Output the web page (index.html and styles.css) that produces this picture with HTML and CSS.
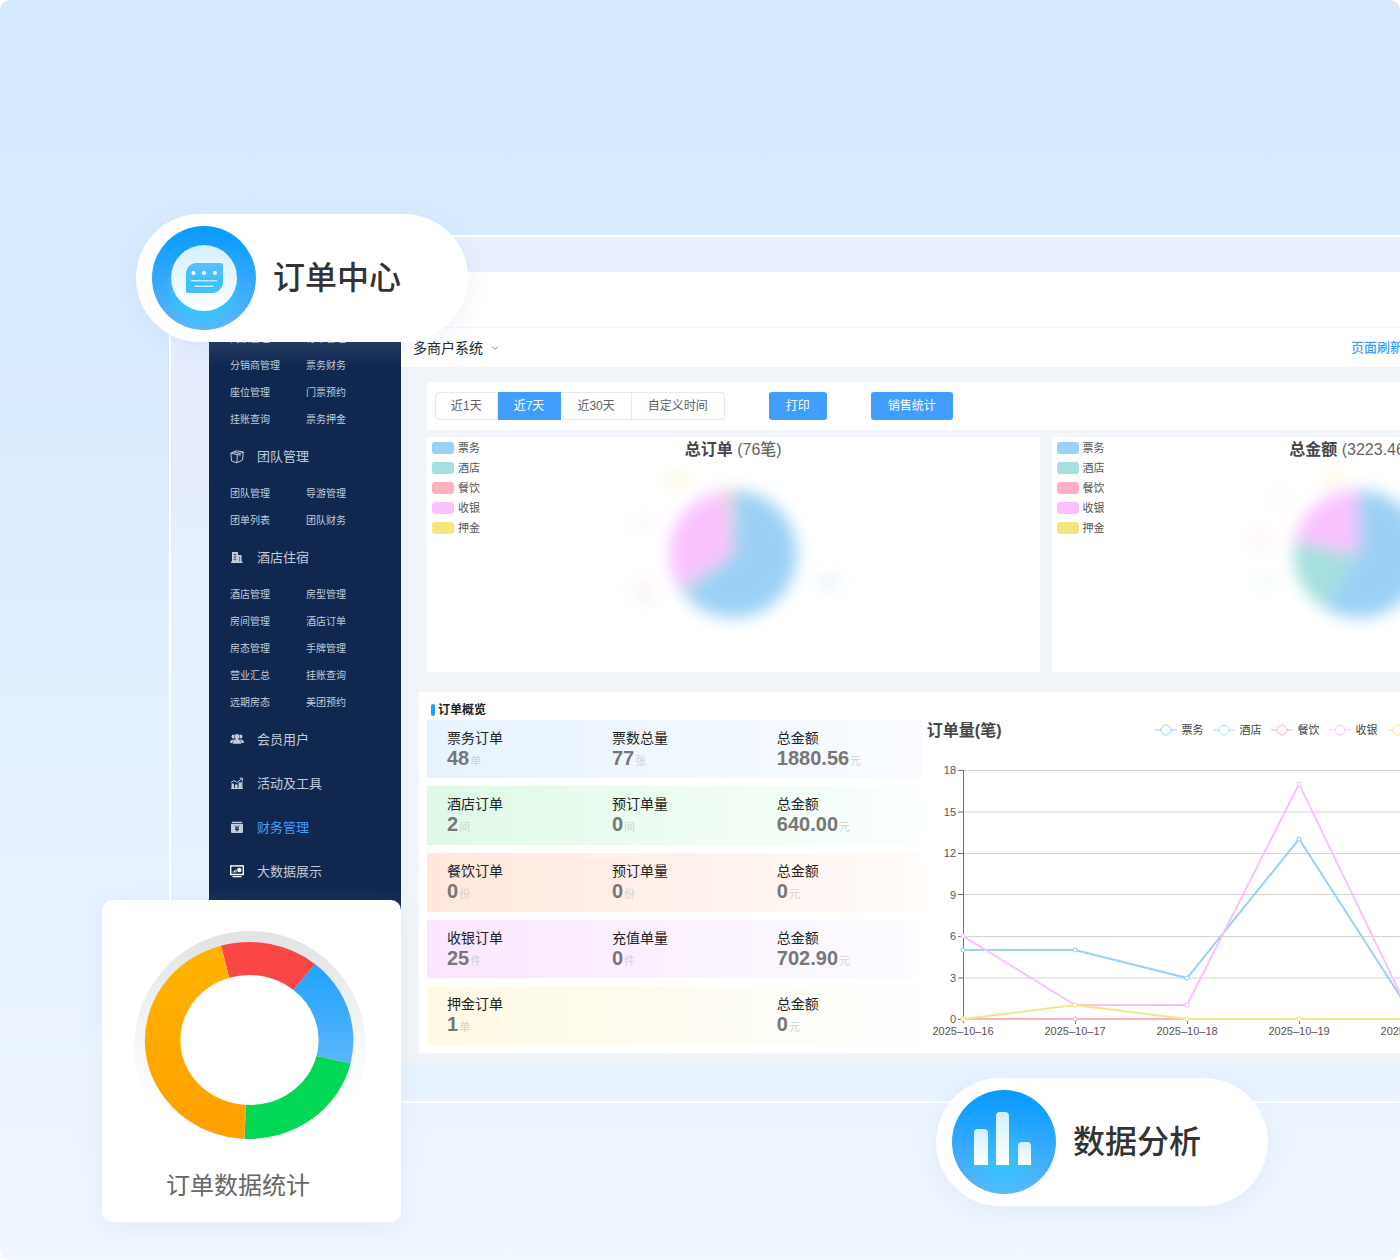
FILE: index.html
```html
<!DOCTYPE html>
<html lang="zh-CN">
<head>
  <meta charset="UTF-8" />
  <meta name="viewport" content="width=device-width, initial-scale=1.0" />
  <title>订单中心 - 多商户系统</title>
  <link rel="stylesheet" href="styles.css">
</head>
<body>

<div class="hero">
  <div class="frame">
    <div class="app">

      <nav class="sidebar">
        <a class="group" href="#">
          <svg class="icon" viewBox="0 0 14 14"><path d="M1 3h12v3a1 1 0 0 0 0 2v3H1V8a1 1 0 0 0 0-2z" fill="currentColor"/></svg>
        </a>
        <div class="sub">
          <a href="#">门票管理</a><a href="#">订单管理</a>
          <a href="#">分销商管理</a><a href="#">票务财务</a>
          <a href="#">座位管理</a><a href="#">门票预约</a>
          <a href="#">挂账查询</a><a href="#">票务押金</a>
        </div>
        <a class="group" href="#">
          <svg class="icon" viewBox="0 0 14 14"><path d="M.8 3.2 6.3.8l7 1.200-.8 8L7 12.800 1.600 11zM.8 3.200l6.500 1.500 6-2.700M7.300 4.700 7 12.800M3.600 2l6.300 1.400v2.800" fill="none" stroke="currentColor" stroke-width="1" stroke-linejoin="round"/></svg>
          团队管理
        </a>
        <div class="sub">
          <a href="#">团队管理</a><a href="#">导游管理</a>
          <a href="#">团单列表</a><a href="#">团队财务</a>
        </div>
        <a class="group" href="#">
          <svg class="icon" viewBox="0 0 14 14"><path d="M2 1h6v3h3.500v6.500h1V12H1v-1.500h1z" fill="currentColor"/><path d="M3.500 3.500h3M3.500 6h3M3.500 8.500h3M5 2.500v7M9.500 5.500v5" stroke="#102850" stroke-width=".5"/></svg>
          酒店住宿
        </a>
        <div class="sub">
          <a href="#">酒店管理</a><a href="#">房型管理</a>
          <a href="#">房间管理</a><a href="#">酒店订单</a>
          <a href="#">房态管理</a><a href="#">手牌管理</a>
          <a href="#">营业汇总</a><a href="#">挂账查询</a>
          <a href="#">远期房态</a><a href="#">美团预约</a>
        </div>
        <a class="group" href="#">
          <svg class="icon" viewBox="0 0 14 14"><g fill="currentColor"><circle cx="3.500" cy="3.500" r="2"/><circle cx="10.500" cy="3.500" r="2"/><path d="M0 10c0-2.500 1.500-3.500 3.500-3.500h7c2 0 3.500 1 3.500 3.500z"/></g><path d="M7 .7c1.600 0 2.500 1.200 2.500 2.800 0 1.200-.5 2.200-1.200 2.800 2 .5 3.200 1.600 3.200 4.700h-9c0-3.100 1.200-4.200 3.200-4.700C5 5.700 4.500 4.700 4.500 3.500 4.500 1.900 5.400.7 7 .7z" fill="currentColor" stroke="#102850" stroke-width=".5"/></svg>
          会员用户
        </a>
        <a class="group" href="#">
          <svg class="icon" viewBox="0 0 14 14"><path d="M1.500 6.500H4V11H1.500zM5 7.500h2.500V11H5zM8.500 5.500H11V11H8.500zM11.200 4.500h1.300V11h-1.300zM1 11h12v1H1z" fill="currentColor"/><path d="M1 5.500 4 3.500l3 2L12 1.500M9.800 1.200h2.700v2.500" fill="none" stroke="currentColor"/></svg>
          活动及工具
        </a>
        <a class="group active" href="#">
          <svg class="icon" viewBox="0 0 14 14"><path d="M2 .8h10v1.200H2zM1 2.800h12V11a1 1 0 0 1-1 1H2a1 1 0 0 1-1-1z" fill="currentColor"/><path d="M5 4.500l2 2 2-2M7 6.500v4M5 7h4M5 8.600h4" fill="none" stroke="#102850"/></svg>
          财务管理
        </a>
        <a class="group" href="#">
          <svg class="icon bright" viewBox="0 0 14 14"><rect x=".7" y=".9" width="12.600" height="8.600" fill="none" stroke="currentColor" stroke-width="1.400"/><path d="M2.500 6.500h1v1h-1zM4 5.500h1v2H4zM5.500 4.500h1v3h-1zM2.500 11h9v1.300h-9z" fill="currentColor"/><circle cx="9.300" cy="5" r="2.200" fill="currentColor"/></svg>
          大数据展示
        </a>
      </nav>

      <main class="main">
        <div class="topbar"></div>
        <header class="crumbs">
          <button class="switcher" type="button">
            多商户系统
            <svg viewBox="0 0 8 8"><path d="M1 2.500 4 5.500 7 2.500" fill="none" stroke="currentColor"/></svg>
          </button>
          <a class="refresh" href="#">页面刷新</a>
        </header>

        <div class="content">
          <div class="toolbar">
            <div class="range">
              <button type="button">近1天</button>
              <button type="button" class="on">近7天</button>
              <button type="button">近30天</button>
              <button type="button">自定义时间</button>
            </div>
            <button class="primary" type="button">打印</button>
            <button class="primary" type="button">销售统计</button>
          </div>

          <div class="pies">
            <section class="pie-card">
              <ul class="swatches">
                <li class="ticket">票务</li>
                <li class="hotel">酒店</li>
                <li class="food">餐饮</li>
                <li class="cash">收银</li>
                <li class="deposit">押金</li>
              </ul>
              <h2>总订单 <span>(76笔)</span></h2>
              <svg class="pie" viewBox="0 0 613 235">
                <defs>
                  <filter id="soft" x="-30%" y="-30%" width="160%" height="160%"><feGaussianBlur stdDeviation="8"/></filter>
                </defs>
                <g filter="url(#soft)">
                  <g opacity=".3">
                    <ellipse cx="250" cy="43" rx="14" ry="6" fill="#f4e77f"/>
                    <ellipse cx="215" cy="86" rx="12" ry="6" fill="#f1dcff"/>
                    <ellipse cx="216" cy="152" rx="12" ry="5" fill="#ffc8d0"/>
                    <ellipse cx="219" cy="161" rx="12" ry="5" fill="#cfdcdc"/>
                    <ellipse cx="402" cy="145" rx="12" ry="7" fill="#a9d2ff"/>
                  </g>
                  <path d="M306 117V53A64 64 0 1 1 259 160z" fill="#9bd1f5"/>
                  <path d="M306 117 259 160A64 64 0 0 1 253 152z" fill="#a6dfdf"/>
                  <path d="M306 117 253 152A64 64 0 0 1 301 53z" fill="#f9c2ff"/>
                  <path d="M306 117 301 53H306z" fill="#f4e77f"/>
                </g>
              </svg>
            </section>

            <section class="pie-card">
              <ul class="swatches">
                <li class="ticket">票务</li>
                <li class="hotel">酒店</li>
                <li class="food">餐饮</li>
                <li class="cash">收银</li>
                <li class="deposit">押金</li>
              </ul>
              <h2>总金额 <span>(3223.46元)</span></h2>
              <svg class="pie" viewBox="0 0 613 235">
                <g filter="url(#soft)">
                  <g opacity=".3">
                    <ellipse cx="282" cy="43" rx="14" ry="6" fill="#f4e77f"/>
                    <ellipse cx="229" cy="61" rx="12" ry="6" fill="#f1dcff"/>
                    <ellipse cx="209" cy="103" rx="12" ry="6" fill="#ffc8d0"/>
                    <ellipse cx="213" cy="146" rx="12" ry="6" fill="#c9efdf"/>
                  </g>
                  <path d="M306 117V53A64 64 0 1 1 274 172z" fill="#9bd1f5"/>
                  <path d="M306 117 274 172A64 64 0 0 1 243 104z" fill="#a6dfdf"/>
                  <path d="M306 117 243 104A64 64 0 0 1 306 53z" fill="#f9c2ff"/>
                </g>
              </svg>
            </section>
          </div>

          <section class="overview">
            <div class="summary">
              <h3>订单概览</h3>
              <dl class="row ticket">
                <div><dt>票务订单</dt><dd>48<small>单</small></dd></div>
                <div><dt>票数总量</dt><dd>77<small>张</small></dd></div>
                <div><dt>总金额</dt><dd>1880.56<small>元</small></dd></div>
              </dl>
              <dl class="row hotel">
                <div><dt>酒店订单</dt><dd>2<small>间</small></dd></div>
                <div><dt>预订单量</dt><dd>0<small>间</small></dd></div>
                <div><dt>总金额</dt><dd>640.00<small>元</small></dd></div>
              </dl>
              <dl class="row food">
                <div><dt>餐饮订单</dt><dd>0<small>份</small></dd></div>
                <div><dt>预订单量</dt><dd>0<small>份</small></dd></div>
                <div><dt>总金额</dt><dd>0<small>元</small></dd></div>
              </dl>
              <dl class="row cash">
                <div><dt>收银订单</dt><dd>25<small>件</small></dd></div>
                <div><dt>充值单量</dt><dd>0<small>件</small></dd></div>
                <div><dt>总金额</dt><dd>702.90<small>元</small></dd></div>
              </dl>
              <dl class="row deposit">
                <div><dt>押金订单</dt><dd>1<small>单</small></dd></div>
                <div class="last"><dt>总金额</dt><dd>0<small>元</small></dd></div>
              </dl>
            </div>

            <div class="trend">
              <div class="trend-head">
                <h2>订单量(笔)</h2>
                <ul class="keys">
                  <li class="ticket"><svg viewBox="0 0 22 12"><path d="M0 6h6M16 6h6"/><circle cx="11" cy="6" r="5"/></svg>票务</li>
                  <li class="hotel"><svg viewBox="0 0 22 12"><path d="M0 6h6M16 6h6"/><circle cx="11" cy="6" r="5"/></svg>酒店</li>
                  <li class="food"><svg viewBox="0 0 22 12"><path d="M0 6h6M16 6h6"/><circle cx="11" cy="6" r="5"/></svg>餐饮</li>
                  <li class="cash"><svg viewBox="0 0 22 12"><path d="M0 6h6M16 6h6"/><circle cx="11" cy="6" r="5"/></svg>收银</li>
                  <li class="deposit"><svg viewBox="0 0 22 12"><path d="M0 6h6M16 6h6"/><circle cx="11" cy="6" r="5"/></svg>押金</li>
                </ul>
              </div>
              <svg class="plot" viewBox="0 0 742 303">
                <path class="grid" d="M41 28.500H714M41 70H714M41 111.500H714M41 152.500H714M41 194.500H714M41 236H714"/>
                <path class="axis" d="M41.500 28V281M36 28.500h5M36 70h5M36 111.500h5M36 152.500h5M36 194.500h5M36 236h5M36 277.500H714M153.500 278v4M265.500 278v4M377.500 278v4M490.500 278v4M602.500 278v4M714.500 278v4"/>
                <g class="ylabels">
                  <text x="34" y="32">18</text>
                  <text x="34" y="74">15</text>
                  <text x="34" y="115">12</text>
                  <text x="34" y="157">9</text>
                  <text x="34" y="198">6</text>
                  <text x="34" y="240">3</text>
                  <text x="34" y="281">0</text>
                </g>
                <g class="xlabels">
                  <text x="41" y="293">2025–10–16</text>
                  <text x="153" y="293">2025–10–17</text>
                  <text x="265" y="293">2025–10–18</text>
                  <text x="377" y="293">2025–10–19</text>
                  <text x="489" y="293">2025–10–20</text>
                  <text x="602" y="293">2025–10–21</text>
                  <text x="714" y="293">2025–10–22</text>
                </g>
                <g class="line ticket">
                  <path d="M41 208 153 208 265 236 377 97 489 271"/>
                  <circle cx="41" cy="208" r="2"/><circle cx="153" cy="208" r="2"/><circle cx="265" cy="236" r="2"/><circle cx="377" cy="97" r="2"/>
                </g>
                <g class="line food">
                  <path d="M41 277H714"/>
                  <circle cx="41" cy="277" r="2"/><circle cx="153" cy="277" r="2"/>
                </g>
                <g class="line cash">
                  <path d="M41 194 153 263 265 263 377 42 489 274"/>
                  <circle cx="41" cy="194" r="2"/><circle cx="153" cy="263" r="2"/><circle cx="265" cy="263" r="2"/><circle cx="377" cy="42" r="2"/>
                </g>
                <g class="line deposit">
                  <path d="M41 277 153 263 265 277H714"/>
                  <circle cx="41" cy="277" r="2"/><circle cx="153" cy="263" r="2"/><circle cx="265" cy="277" r="2"/><circle cx="377" cy="277" r="2"/>
                </g>
              </svg>
            </div>
          </section>
        </div>
      </main>
    </div>
  </div>

  <!-- floating badges -->
  <div class="pill pill-orders">
    <svg viewBox="0 0 104 104">
      <defs>
        <linearGradient id="disc" x1="0" y1="0" x2="0" y2="1"><stop offset="0" stop-color="#069aff"/><stop offset="1" stop-color="#5cb6fa"/></linearGradient>
        <radialGradient id="glow" cx=".5" cy=".6" r=".38"><stop offset="0" stop-color="#2ad0ff"/><stop offset=".6" stop-color="#2ccbff" stop-opacity=".7"/><stop offset="1" stop-color="#2ad0ff" stop-opacity="0"/></radialGradient>
        <radialGradient id="glow-low" cx=".5" cy=".68" r=".36"><stop offset="0" stop-color="#2ccbff" stop-opacity=".8"/><stop offset="1" stop-color="#2ad0ff" stop-opacity="0"/></radialGradient>
        <linearGradient id="pale" x1="0" y1="0" x2="0" y2="1"><stop offset="0" stop-color="#d3f0ff"/><stop offset="1" stop-color="#fff"/></linearGradient>
        <linearGradient id="note" x1="0" y1="0" x2="0" y2="1"><stop offset="0" stop-color="#5fbcf8"/><stop offset=".7" stop-color="#36c3fb"/><stop offset="1" stop-color="#4bbdfa"/></linearGradient>
      </defs>
      <circle cx="52" cy="52" r="52" fill="url(#disc)"/>
      <circle cx="52" cy="52" r="52" fill="url(#glow)"/>
      <circle cx="52" cy="52" r="33" fill="url(#pale)"/>
      <path d="M44 37H69a2 2 0 0 1 2 2V56a11 11 0 0 1-11 11H36a2 2 0 0 1-2-2V47a10 10 0 0 1 10-10z" fill="url(#note)"/>
      <g fill="#fff"><circle cx="41.500" cy="47" r="2"/><circle cx="52" cy="47" r="2"/><circle cx="63" cy="47" r="2"/></g>
      <path d="M39.500 54.700h25M43 60.300h18" stroke="#c6eeff" stroke-width="1.600" stroke-linecap="round"/>
    </svg>
    <strong>订单中心</strong>
  </div>

  <div class="pill pill-analysis">
    <svg viewBox="0 0 104 104">
      <circle cx="52" cy="52" r="52" fill="url(#disc)"/>
      <circle cx="52" cy="52" r="52" fill="url(#glow-low)"/>
      <path d="M22 75V43a4 4 0 0 1 4-4h6a4 4 0 0 1 4 4v32z" fill="url(#pale)"/>
      <path d="M44 75V26a4 4 0 0 1 4-4h5a4 4 0 0 1 4 4v49z" fill="url(#pale)"/>
      <path d="M66 75V56a4 4 0 0 1 4-4h5a4 4 0 0 1 4 4v19z" fill="url(#pale)"/>
    </svg>
    <strong>数据分析</strong>
  </div>

  <div class="stat-card">
    <svg viewBox="0 0 233 232">
      <defs>
        <linearGradient id="halo" x1="0" y1="0" x2="0" y2="1"><stop offset="0" stop-color="#e1e2e4"/><stop offset=".5" stop-color="#f7f8f9"/><stop offset=".75" stop-color="#fff"/></linearGradient>
        <linearGradient id="amber" x1="0" y1="0" x2="0" y2="1"><stop offset="0" stop-color="#ffb400"/><stop offset="1" stop-color="#ff9f00"/></linearGradient>
        <linearGradient id="azure" x1="0" y1="0" x2="0" y2="1"><stop offset="0" stop-color="#1fa3ff"/><stop offset="1" stop-color="#5cb6f9"/></linearGradient>
      </defs>
      <circle cx="116" cy="117" r="116" fill="url(#halo)"/>
      <ellipse cx="116" cy="111" rx="80" ry="80" fill="#fff"/>
      <path d="M87 15.700A104.500 98.500 0 0 1 181 34L159.500 60A69 65 0 0 0 95.300 47.800z" fill="#f94745"/>
      <path d="M181 34A104.500 98.500 0 0 1 216.500 133.500L182.500 126A69 65 0 0 0 159.500 60z" fill="url(#azure)"/>
      <path d="M216.500 133.500A104.500 98.500 0 0 1 110.500 208.900L111.800 174.900A69 65 0 0 0 182.500 126z" fill="#02d855"/>
      <path d="M110.500 208.900A104.500 98.500 0 0 1 87 15.700L95.300 47.800A69 65 0 0 0 111.800 174.900z" fill="url(#amber)"/>
    </svg>
    <p>订单数据统计</p>
  </div>
</div>

</body>
</html>
```
FILE: styles.css
```css
* {
  box-sizing: border-box;
}

body {
  margin: 0;
  background: #ffffff;
  font-family: "Liberation Sans", "Noto Sans CJK SC", sans-serif;
  line-height: 20px;
  color: #333333;
}

h2, h3, p, ul, dl, dd {
  margin: 0;
  padding: 0;
}

ul {
  list-style: none;
}

a {
  color: inherit;
  text-decoration: none;
}

button {
  font-family: inherit;
  line-height: 20px;
  cursor: pointer;
}

.hero {
  position: relative;
  min-height: 100vh;
  padding: 235px 0 157px 169px;
  overflow: hidden;
  border-radius: 10px;
  background: linear-gradient(180deg, #d5e9ff 0%, #dbecff 35%, #e5f1ff 65%, #f0f7ff 100%);
}

/* the window runs past the right edge of the page */
.frame {
  margin-right: -280px;
  padding: 35px 0 38px 38px;
  border: 2px solid #ffffff;
  border-right: none;
  background: linear-gradient(180deg, #e8efff 0%, #e5edff 20%, #e5f1ff 60%, #e8f3ff 100%);
}

.app {
  display: flex;
}

/* sidebar */
.sidebar {
  flex: 0 0 192px;
  padding-top: 8px;
  background: #102850;
  color: #c3ccdb;
}

.group {
  display: flex;
  align-items: center;
  gap: 13px;
  height: 44px;
  padding-left: 21px;
  font-size: 13px;
}

.group.active {
  color: #409eff;
}

.icon {
  width: 14px;
  height: 14px;
  color: #c3ccdb;
}

.icon.bright {
  color: #ffffff;
}

.sub {
  display: grid;
  grid-template-columns: 76px 1fr;
  padding: 1px 0 2px 21px;
  font-size: 10px;
  line-height: 27px;
}

/* main */
.main {
  flex: 1;
  min-width: 0;
  background: #f1f5f9;
}

.topbar {
  height: 55px;
  background: #ffffff;
}

.crumbs {
  display: flex;
  align-items: center;
  justify-content: space-between;
  height: 40px;
  padding: 0 277px 0 12px;
  border-top: 1px solid #f7f7f7;
  background: #ffffff;
}

.switcher {
  display: flex;
  align-items: center;
  gap: 8px;
  padding: 0;
  border: none;
  background: none;
  color: #222222;
  font-size: 14px;
}

.switcher svg {
  width: 8px;
  height: 8px;
  color: #888888;
}

.refresh {
  color: #409eff;
  font-size: 13px;
  font-weight: 500;
}

.content {
  padding: 15px 8px 10px 18px;
}

.toolbar {
  display: flex;
  align-items: center;
  gap: 44px;
  height: 48px;
  margin: 0 8px;
  padding: 0 8px;
  background: #ffffff;
}

.range {
  display: flex;
}

.range button {
  height: 28px;
  padding: 0 16px;
  border: 1px solid #e6eaf0;
  border-left: none;
  background: #ffffff;
  color: #606266;
  font-size: 12px;
}

.range button:first-child {
  padding: 0 15px;
  border-left: 1px solid #e6eaf0;
  border-radius: 4px 0 0 4px;
}

.range button:last-child {
  border-radius: 0 4px 4px 0;
}

.range .on {
  border-color: #409eff;
  background: #409eff;
  color: #ffffff;
}

.primary {
  height: 28px;
  padding: 0 17px;
  border: none;
  border-radius: 3px;
  background: #409eff;
  color: #ffffff;
  font-size: 12px;
}

.pies {
  display: grid;
  grid-template-columns: 1fr 1fr;
  gap: 12px;
  margin: 7px 8px 20px;
}

.pie-card {
  display: grid;
  background: #ffffff;
}

.pie-card > * {
  grid-area: 1 / 1;
}

.pie-card h2 {
  padding-top: 2px;
  text-align: center;
}

h2 {
  color: #464646;
  font-size: 16px;
  font-weight: 700;
  line-height: 22px;
}

h2 span {
  color: #666666;
  font-weight: 500;
}

.pie {
  width: 100%;
  display: block;
}

.swatches {
  padding: 1px 0 0 5px;
  color: #555555;
  font-size: 11px;
}

.swatches li {
  display: flex;
  align-items: center;
  gap: 4px;
}

.swatches li::before {
  content: "";
  width: 22px;
  height: 12px;
  border-radius: 3px;
  background: var(--tone);
}

.ticket { --tone: #9bd1f5; --wash: #e6f3ff; --wash-end: #fafcff; }
.hotel { --tone: #a6dfdf; --wash: #dff9e6; --wash-end: #fbfffd; }
.food { --tone: #ffb0c1; --wash: #ffe7dc; --wash-end: #fffcfa; }
.cash { --tone: #f9c2ff; --wash: #fbe6ff; --wash-end: #fcfdff; }
.deposit { --tone: #f4e77f; --wash: #fffae3; --wash-end: #fdfeff; }

/* order overview */
.overview {
  display: grid;
  grid-template-columns: 2fr 3fr;
  min-height: 361px;
  padding: 8px;
  background: #ffffff;
}

.summary {
  display: flex;
  flex-direction: column;
}

.summary h3 {
  display: flex;
  align-items: center;
  gap: 3px;
  padding-left: 4px;
  color: #222222;
  font-size: 12px;
}

.summary h3::before {
  content: "";
  width: 4px;
  height: 12px;
  border-radius: 2px;
  background: #1c9dff;
}

.row {
  flex: 1;
  display: grid;
  grid-template-columns: repeat(3, 1fr);
  padding-top: 8px;
  background: linear-gradient(90deg, var(--wash), var(--wash-end));
}

.row + .row {
  margin-top: 8px;
}

.row > div {
  padding-left: 20px;
}

.row .last {
  grid-column: 3;
}

.row dt {
  color: #222222;
  font-size: 14px;
}

.row dd {
  color: #777777;
  font-size: 20px;
  font-weight: 700;
}

.row small {
  margin-left: 1px;
  color: #cfd3d6;
  font-size: 11px;
  font-weight: 400;
}

.trend {
  padding-top: 20px;
}

.trend-head {
  display: grid;
  grid-template-columns: 1fr auto 1fr;
  padding-left: 5px;
}

.keys {
  display: flex;
  align-items: flex-start;
  gap: 10px;
  color: #444444;
  font-size: 11px;
}

.keys li {
  display: flex;
  align-items: center;
  gap: 4px;
}

.keys svg {
  width: 22px;
  height: 12px;
  fill: #ffffff;
  stroke: var(--tone);
}

.plot {
  display: block;
  width: 100%;
}

.plot .grid,
.plot .axis {
  fill: none;
  stroke: #d4d4d4;
}

.plot .axis {
  stroke: #6e7079;
}

.plot text {
  fill: #555555;
  font-size: 11px;
}

.ylabels {
  text-anchor: end;
}

.xlabels {
  text-anchor: middle;
}

.line path {
  fill: none;
  stroke: var(--tone);
  stroke-width: 2;
}

.line circle {
  fill: #ffffff;
  stroke: var(--tone);
}

/* floating pieces */
.pill {
  position: absolute;
  display: flex;
  align-items: center;
  gap: 17px;
  width: 332px;
  height: 128px;
  padding-left: 16px;
  border-radius: 64px;
  background: #ffffff;
  box-shadow: 0 6px 24px rgba(170, 190, 220, 0.2);
}

.pill svg {
  width: 104px;
  height: 104px;
}

.pill strong {
  color: #333333;
  font-size: 32px;
  font-weight: 500;
  line-height: 40px;
}

.pill-orders {
  top: 214px;
  left: 136px;
}

.pill-analysis {
  top: 1078px;
  left: 936px;
}

.stat-card {
  position: absolute;
  top: 900px;
  left: 102px;
  width: 299px;
  padding: 30px 32px 12px;
  border-radius: 10px;
  background: #ffffff;
  box-shadow: 0 6px 24px rgba(170, 190, 220, 0.2);
}

.stat-card svg {
  display: block;
  width: 233px;
}

.stat-card p {
  padding-left: 32px;
  color: #666666;
  font-size: 24px;
  line-height: 48px;
}
```
